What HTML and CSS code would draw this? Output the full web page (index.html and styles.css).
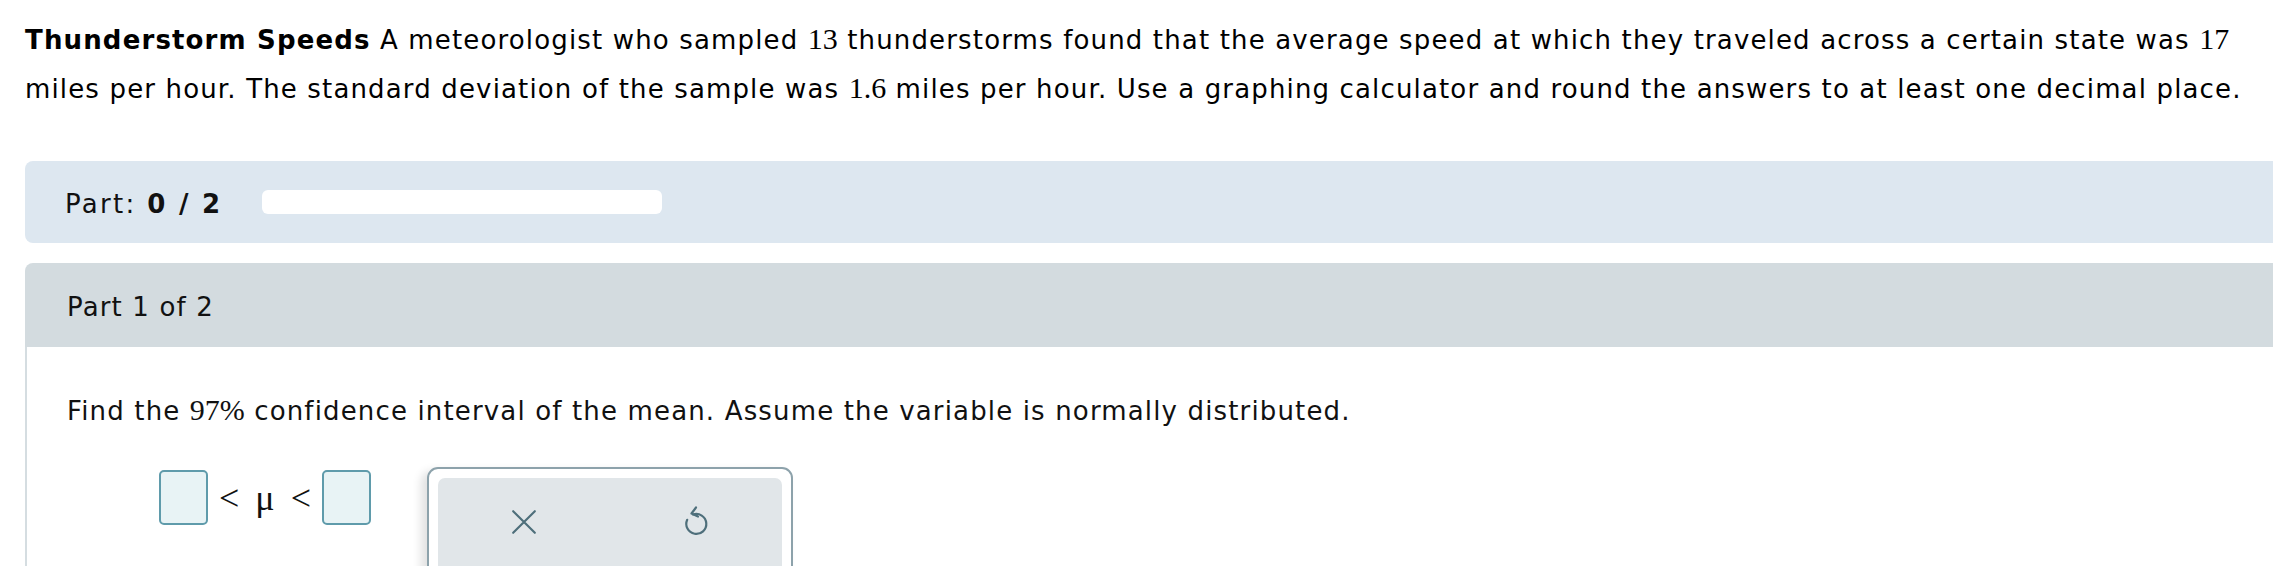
FILE: index.html
```html
<!DOCTYPE html>
<html>
<head>
<meta charset="utf-8">
<link rel="stylesheet" href="styles.css">
</head>
<body>
<div class="page">
  <p class="intro"><b>Thunderstorm Speeds</b> A meteorologist who sampled <span class="num">13</span> thunderstorms found that the average speed at which they traveled across a certain state was <span class="num">17</span> miles per hour. The standard deviation of the sample was <span class="num">1.6</span> miles per hour. Use a graphing calculator and round the answers to at least one decimal place.</p>

  <div class="progress">
    <span class="progress-label">Part: <b>0 / 2</b></span>
    <div class="progress-track"></div>
  </div>

  <div class="part">
    <div class="part-head">Part 1 of 2</div>
    <div class="part-body">
      <p class="question">Find the <span class="num">97%</span> confidence interval of the mean. Assume the variable is normally distributed.</p>
      <div class="answer-row">
        <div class="ineq">
          <span class="box"></span>
          <span class="op lt1">&lt;</span>
          <span class="op mu">μ</span>
          <span class="op lt2">&lt;</span>
          <span class="box"></span>
        </div>
        <div class="keypad">
          <div class="keypad-inner">
            <div class="key">
              <svg width="26" height="26" viewBox="0 0 24 24" fill="none" stroke="#4e6f7b" stroke-width="2" stroke-linecap="round"><path d="M2 2 L22 22 M22 2 L2 22"/></svg>
            </div>
            <div class="key">
              <svg width="28" height="34" viewBox="0 0 28 34" fill="none" stroke="#4e6f7b" stroke-width="2.2" stroke-linecap="round" stroke-linejoin="round"><path d="M11 9.5 A10 10 0 1 1 5.2 14.8"/><path d="M14 2.5 L9.5 8.5 L16 11.5"/></svg>
            </div>
          </div>
        </div>
      </div>
    </div>
  </div>
</div>
</body>
</html>
```
FILE: styles.css
```css
html, body {
  margin: 0;
  padding: 0;
  background: #ffffff;
  overflow: hidden;
}
.page {
  width: 2290px;
  padding: 15px 0 0 25px;
  font-family: "DejaVu Sans", Verdana, sans-serif;
  font-size: 26px;
  letter-spacing: 1.15px;
  color: #000;
}
.intro {
  margin: 0;
  max-width: 2250px;
  line-height: 48px;
}
.num {
  font-family: "Liberation Serif", "Times New Roman", serif;
  font-size: 30px;
  letter-spacing: 0;
}
.progress {
  margin-top: 48px;
  height: 82px;
  background: #dde7f0;
  border-radius: 8px 0 0 8px;
  display: flex;
  align-items: center;
  padding-left: 40px;
}
.progress-label {
  padding-top: 3px;
  color: #111;
  letter-spacing: 2.3px;
}
.progress-track {
  margin-left: 40px;
  width: 400px;
  height: 24px;
  background: #ffffff;
  border-radius: 6px;
}
.part {
  margin-top: 20px;
}
.part-head {
  height: 84px;
  background: #d3dbdf;
  border-radius: 8px 0 0 0;
  display: flex;
  align-items: center;
  padding-left: 42px;
  padding-top: 4px;
  box-sizing: border-box;
  color: #111;
}
.part-body {
  border-left: 2px solid #d5dde1;
  padding: 39px 0 0 40px;
  height: 300px;
}
.question {
  margin: 0;
  line-height: 48px;
  color: #111;
}
.answer-row {
  display: flex;
  align-items: flex-start;
  margin-top: 32px;
  padding-left: 92px;
}
.ineq {
  display: flex;
  align-items: center;
  margin-top: 3px;
}
.box {
  width: 45px;
  height: 51px;
  border: 2px solid #5f9bab;
  border-radius: 5px;
  background: #e8f3f5;
}
.op {
  font-family: "Liberation Serif", "Times New Roman", serif;
  font-size: 36px;
  letter-spacing: 0;
  line-height: 1;
  color: #111;
}
.lt1 { margin: 0 8px 0 11px; }
.mu { margin: 0 8px; }
.lt2 { margin: 0 11px 0 8px; }
.keypad {
  margin-left: 56px;
  width: 366px;
  height: 120px;
  border: 2px solid #8da2ab;
  border-radius: 11px;
  box-shadow: -6px 4px 10px rgba(0,0,0,0.12);
  padding: 9px 9px 0 9px;
  box-sizing: border-box;
}
.keypad-inner {
  background: #e1e6e9;
  border-radius: 7px;
  display: flex;
  height: 120px;
}
.key {
  flex: 1;
  height: 88px;
  display: flex;
  align-items: center;
  justify-content: center;
}
```
